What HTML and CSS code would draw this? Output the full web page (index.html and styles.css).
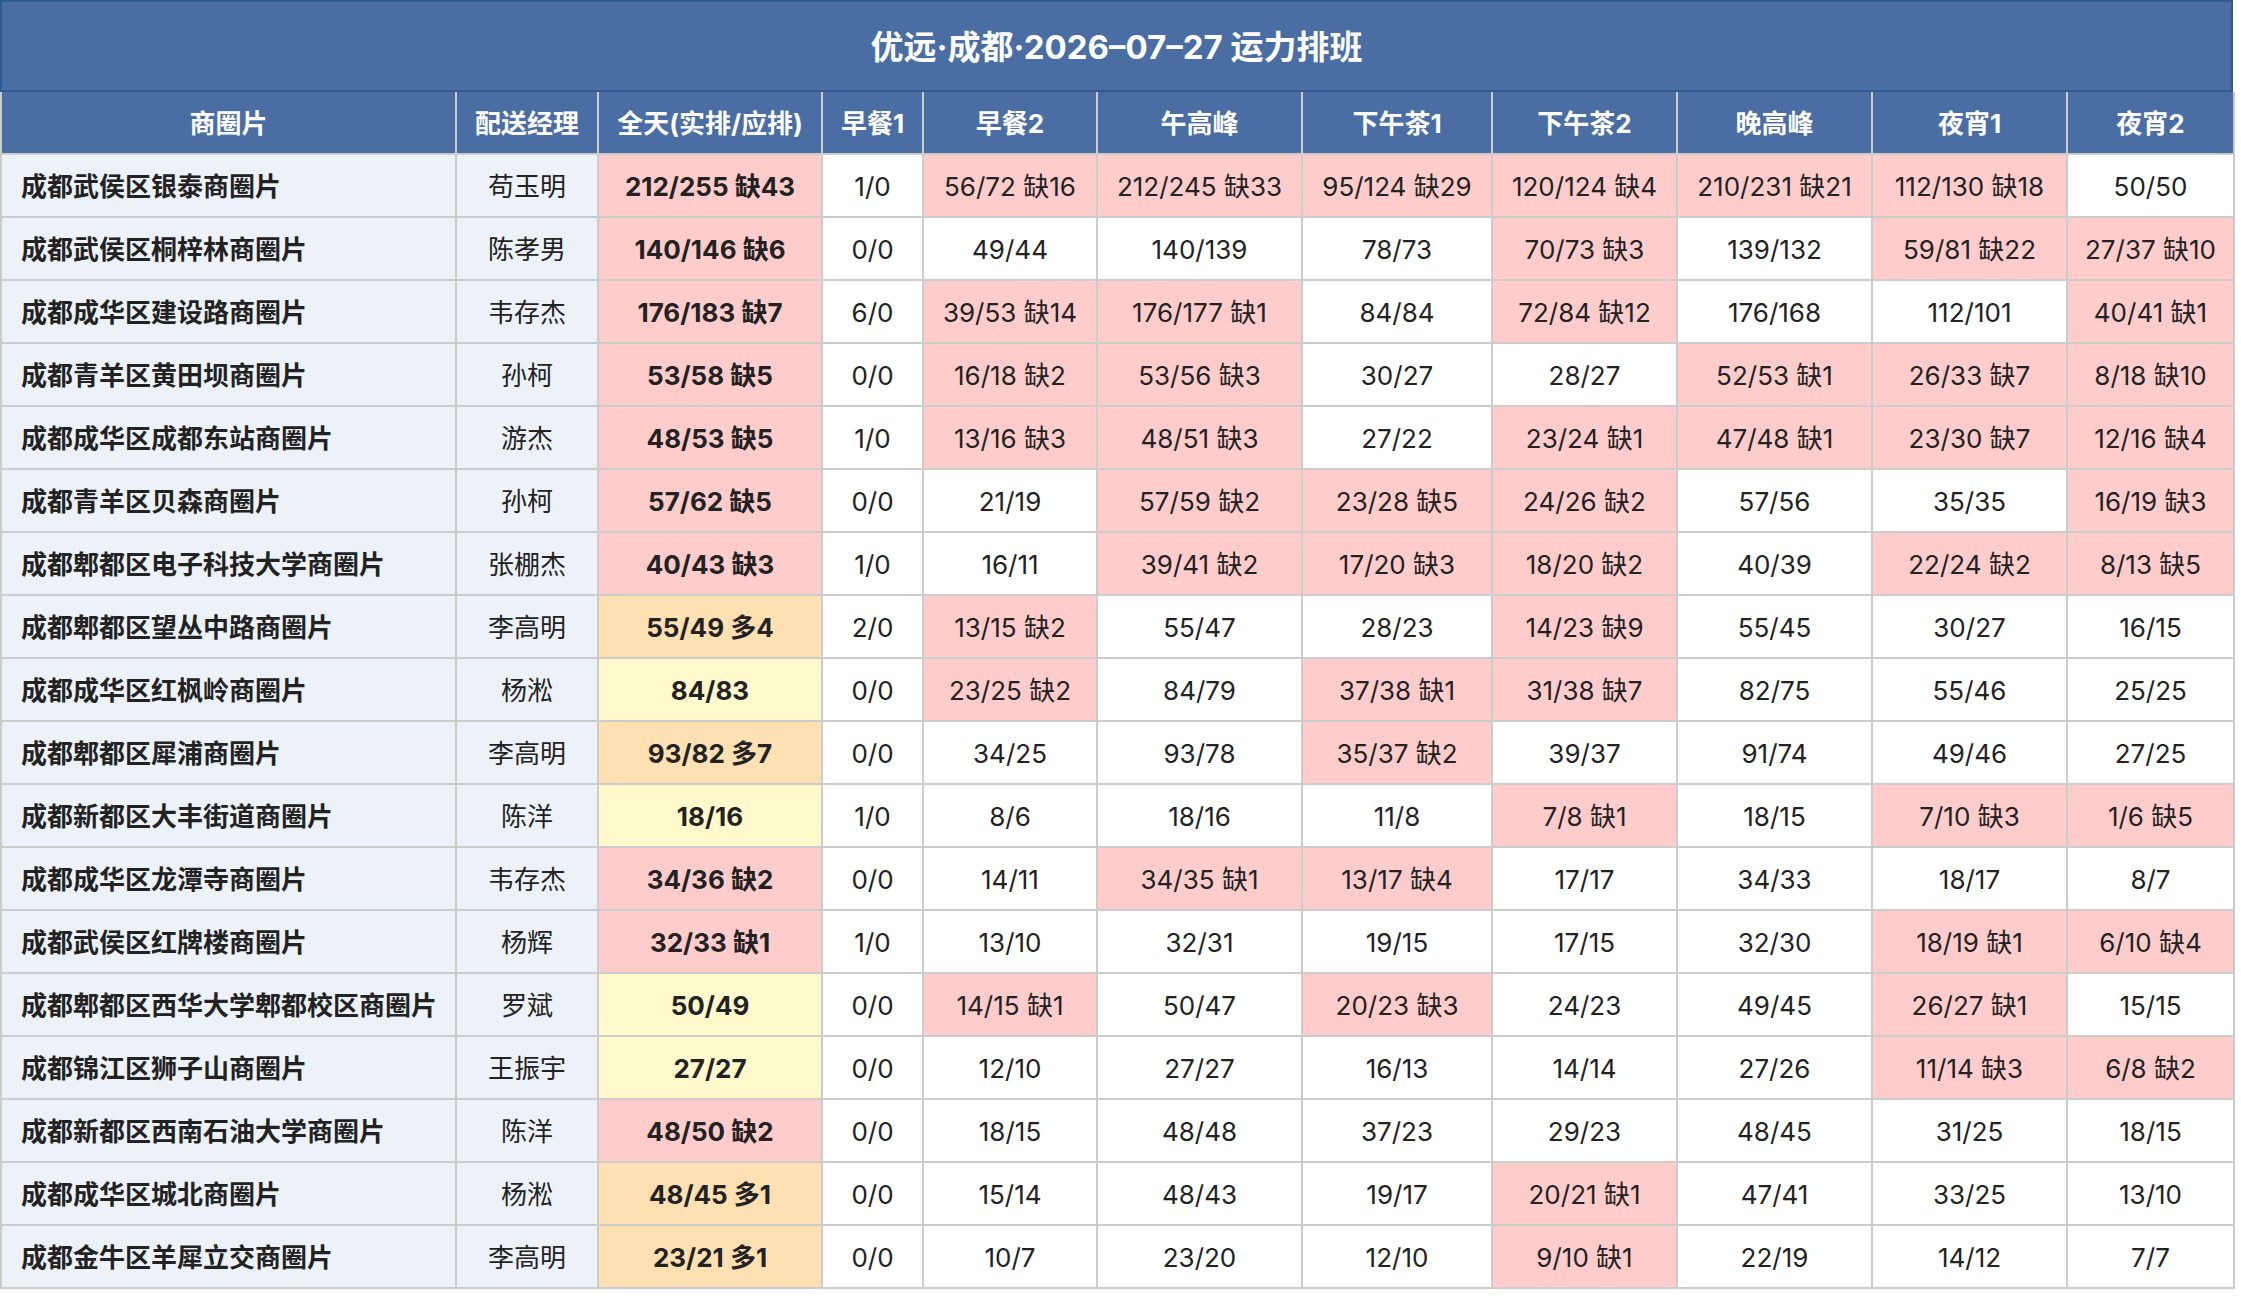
FILE: index.html
```html
<!DOCTYPE html>
<html lang="zh-CN">
<head>
<meta charset="utf-8">
<title>优远·成都·2026-07-27 运力排班</title>
<link rel="stylesheet" href="styles.css">
</head>
<body>
<div class="sheet">
  <div class="title">优远·成都·2026–07–27 运力排班</div>
  <table class="grid">
    <colgroup>
      <col class="c-name"><col class="c-mgr"><col class="c-total"><col class="c-b1"><col class="c-b2"><col class="c-noon"><col class="c-t1"><col class="c-t2"><col class="c-eve"><col class="c-n1"><col class="c-n2">
    </colgroup>
    <thead>
      <tr><th>商圈片</th><th>配送经理</th><th>全天(实排/应排)</th><th>早餐1</th><th>早餐2</th><th>午高峰</th><th>下午茶1</th><th>下午茶2</th><th>晚高峰</th><th>夜宵1</th><th>夜宵2</th></tr>
    </thead>
    <tbody>
      <tr><td class="name">成都武侯区银泰商圈片</td><td class="mgr">苟玉明</td><td class="total short">212/255 缺43</td><td>1/0</td><td class="short">56/72 缺16</td><td class="short">212/245 缺33</td><td class="short">95/124 缺29</td><td class="short">120/124 缺4</td><td class="short">210/231 缺21</td><td class="short">112/130 缺18</td><td>50/50</td></tr>
      <tr><td class="name">成都武侯区桐梓林商圈片</td><td class="mgr">陈孝男</td><td class="total short">140/146 缺6</td><td>0/0</td><td>49/44</td><td>140/139</td><td>78/73</td><td class="short">70/73 缺3</td><td>139/132</td><td class="short">59/81 缺22</td><td class="short">27/37 缺10</td></tr>
      <tr><td class="name">成都成华区建设路商圈片</td><td class="mgr">韦存杰</td><td class="total short">176/183 缺7</td><td>6/0</td><td class="short">39/53 缺14</td><td class="short">176/177 缺1</td><td>84/84</td><td class="short">72/84 缺12</td><td>176/168</td><td>112/101</td><td class="short">40/41 缺1</td></tr>
      <tr><td class="name">成都青羊区黄田坝商圈片</td><td class="mgr">孙柯</td><td class="total short">53/58 缺5</td><td>0/0</td><td class="short">16/18 缺2</td><td class="short">53/56 缺3</td><td>30/27</td><td>28/27</td><td class="short">52/53 缺1</td><td class="short">26/33 缺7</td><td class="short">8/18 缺10</td></tr>
      <tr><td class="name">成都成华区成都东站商圈片</td><td class="mgr">游杰</td><td class="total short">48/53 缺5</td><td>1/0</td><td class="short">13/16 缺3</td><td class="short">48/51 缺3</td><td>27/22</td><td class="short">23/24 缺1</td><td class="short">47/48 缺1</td><td class="short">23/30 缺7</td><td class="short">12/16 缺4</td></tr>
      <tr><td class="name">成都青羊区贝森商圈片</td><td class="mgr">孙柯</td><td class="total short">57/62 缺5</td><td>0/0</td><td>21/19</td><td class="short">57/59 缺2</td><td class="short">23/28 缺5</td><td class="short">24/26 缺2</td><td>57/56</td><td>35/35</td><td class="short">16/19 缺3</td></tr>
      <tr><td class="name">成都郫都区电子科技大学商圈片</td><td class="mgr">张棚杰</td><td class="total short">40/43 缺3</td><td>1/0</td><td>16/11</td><td class="short">39/41 缺2</td><td class="short">17/20 缺3</td><td class="short">18/20 缺2</td><td>40/39</td><td class="short">22/24 缺2</td><td class="short">8/13 缺5</td></tr>
      <tr><td class="name">成都郫都区望丛中路商圈片</td><td class="mgr">李高明</td><td class="total over">55/49 多4</td><td>2/0</td><td class="short">13/15 缺2</td><td>55/47</td><td>28/23</td><td class="short">14/23 缺9</td><td>55/45</td><td>30/27</td><td>16/15</td></tr>
      <tr><td class="name">成都成华区红枫岭商圈片</td><td class="mgr">杨淞</td><td class="total near">84/83</td><td>0/0</td><td class="short">23/25 缺2</td><td>84/79</td><td class="short">37/38 缺1</td><td class="short">31/38 缺7</td><td>82/75</td><td>55/46</td><td>25/25</td></tr>
      <tr><td class="name">成都郫都区犀浦商圈片</td><td class="mgr">李高明</td><td class="total over">93/82 多7</td><td>0/0</td><td>34/25</td><td>93/78</td><td class="short">35/37 缺2</td><td>39/37</td><td>91/74</td><td>49/46</td><td>27/25</td></tr>
      <tr><td class="name">成都新都区大丰街道商圈片</td><td class="mgr">陈洋</td><td class="total near">18/16</td><td>1/0</td><td>8/6</td><td>18/16</td><td>11/8</td><td class="short">7/8 缺1</td><td>18/15</td><td class="short">7/10 缺3</td><td class="short">1/6 缺5</td></tr>
      <tr><td class="name">成都成华区龙潭寺商圈片</td><td class="mgr">韦存杰</td><td class="total short">34/36 缺2</td><td>0/0</td><td>14/11</td><td class="short">34/35 缺1</td><td class="short">13/17 缺4</td><td>17/17</td><td>34/33</td><td>18/17</td><td>8/7</td></tr>
      <tr><td class="name">成都武侯区红牌楼商圈片</td><td class="mgr">杨辉</td><td class="total short">32/33 缺1</td><td>1/0</td><td>13/10</td><td>32/31</td><td>19/15</td><td>17/15</td><td>32/30</td><td class="short">18/19 缺1</td><td class="short">6/10 缺4</td></tr>
      <tr><td class="name">成都郫都区西华大学郫都校区商圈片</td><td class="mgr">罗斌</td><td class="total near">50/49</td><td>0/0</td><td class="short">14/15 缺1</td><td>50/47</td><td class="short">20/23 缺3</td><td>24/23</td><td>49/45</td><td class="short">26/27 缺1</td><td>15/15</td></tr>
      <tr><td class="name">成都锦江区狮子山商圈片</td><td class="mgr">王振宇</td><td class="total near">27/27</td><td>0/0</td><td>12/10</td><td>27/27</td><td>16/13</td><td>14/14</td><td>27/26</td><td class="short">11/14 缺3</td><td class="short">6/8 缺2</td></tr>
      <tr><td class="name">成都新都区西南石油大学商圈片</td><td class="mgr">陈洋</td><td class="total short">48/50 缺2</td><td>0/0</td><td>18/15</td><td>48/48</td><td>37/23</td><td>29/23</td><td>48/45</td><td>31/25</td><td>18/15</td></tr>
      <tr><td class="name">成都成华区城北商圈片</td><td class="mgr">杨淞</td><td class="total over">48/45 多1</td><td>0/0</td><td>15/14</td><td>48/43</td><td>19/17</td><td class="short">20/21 缺1</td><td>47/41</td><td>33/25</td><td>13/10</td></tr>
      <tr><td class="name">成都金牛区羊犀立交商圈片</td><td class="mgr">李高明</td><td class="total over">23/21 多1</td><td>0/0</td><td>10/7</td><td>23/20</td><td>12/10</td><td class="short">9/10 缺1</td><td>22/19</td><td>14/12</td><td>7/7</td></tr>
    </tbody>
  </table>
</div>
</body>
</html>
```

FILE: styles.css
```css
html, body {
  margin: 0;
  padding: 0;
  background: #ffffff;
}

body {
  font-family: Inter, "Noto Sans CJK SC", sans-serif;
  color: #222222;
}

.sheet {
  display: inline-block;
  width: 2233px;
}

.title {
  box-sizing: border-box;
  height: 92px;
  padding-top: 2px;
  line-height: 86px;
  border: 2px solid #2f5b91;
  background: #4a6ea4;
  color: #ffffff;
  font-size: 33px;
  font-weight: bold;
  text-align: center;
}

.grid {
  table-layout: fixed;
  width: 2233px;
  border-collapse: collapse;
  font-size: 26px;
  line-height: 32px;
}

.c-name { width: 455px; }
.c-mgr { width: 142px; }
.c-total { width: 224px; }
.c-b1 { width: 101px; }
.c-b2 { width: 174px; }
.c-noon { width: 205px; }
.c-t1 { width: 190px; }
.c-t2 { width: 185px; }
.c-eve { width: 195px; }
.c-n1 { width: 195px; }
.c-n2 { width: 167px; }

.grid th,
.grid td {
  border: 2px solid #cccccc;
  padding: 3px 6px 0;
  text-align: center;
  vertical-align: middle;
  white-space: nowrap;
  overflow: hidden;
}

.grid thead tr {
  height: 62px;
}

.grid th {
  background: #4a6ea4;
  color: #ffffff;
  font-weight: bold;
  border-top: none;
}

.grid tbody tr {
  height: 63px;
}

.grid td {
  background: #ffffff;
}

.grid td.name {
  text-align: left;
  padding-left: 19px;
  font-weight: bold;
  background: #edf2f9;
}

.grid td.mgr {
  background: #edf2f9;
}

.grid td.total {
  font-weight: bold;
}

.grid td.short {
  background: #ffcccc;
}

.grid td.over {
  background: #ffe0b2;
}

.grid td.near {
  background: #fff9cc;
}
```
